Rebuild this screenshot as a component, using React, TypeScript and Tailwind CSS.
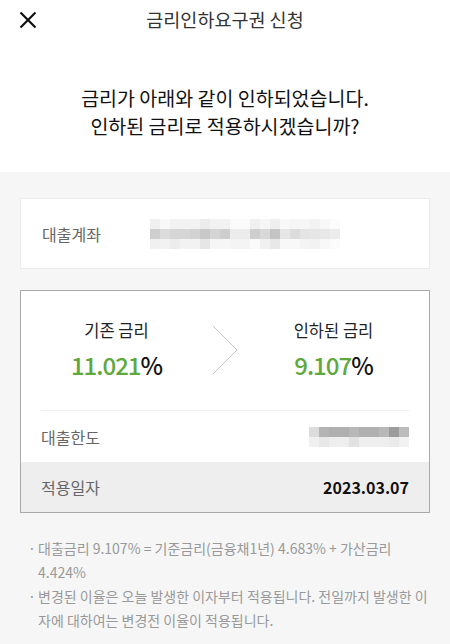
import React from "react";

const accountBlur = [
  ["#f0f0f0", "#f8f8f8", "#f2f2f2", "#f2f2f2", "#f2f2f2", "#ececec", "#f2f2f2", "#f2f2f2", "#fafafa", "#fafafa", "#f0f0f0", "#f6f6f6", "#eeeeee", "#f8f8f8", "#f6f6f6", "#f6f6f6", "#f2f2f2", "#f8f8f8", "#fcfcfc"],
  ["#cecece", "#dcdcdc", "#d6d6d6", "#d6d6d6", "#d2d2d2", "#c8c8c8", "#d4d4d4", "#cecece", "#ececec", "#ececec", "#cecece", "#d8d8d8", "#c4c4c4", "#e6e6e6", "#dcdcdc", "#e4e4e4", "#e6e6e6", "#e8e8e8", "#ececec"],
  ["#f0f0f0", "#f2f2f2", "#ececec", "#f2f2f2", "#f2f2f2", "#e6e6e6", "#f6f6f6", "#f6f6f6", "#f4f4f4", "#f4f4f4", "#fafafa", "#f0f0f0", "#e8e8e8", "#f8f8f8", "#f8f8f8", "#f4f4f4", "#f2f2f2", "#f8f8f8", "#fcfcfc"],
];

const limitBlur = [
  ["#dcdcdc", "#b4b4b4", "#b0b0b0", "#b0b0b0", "#b8b8b8", "#b0b0b0", "#b0b0b0", "#b8b8b8", "#9c9c9c", "#bcbcbc"],
  ["#f0f0f0", "#e8e8e8", "#eeeeee", "#eeeeee", "#e2e2e2", "#eeeeee", "#eeeeee", "#eeeeee", "#eaeaea", "#f2f2f2"],
];

// masked value, drawn as pixel blocks
const Blur = ({ rows }: { rows: string[][] }) => (
  <div className="flex flex-col">
    {rows.map((row, r) => (
      <div key={r} className="flex">
        {row.map((c, i) => (
          <div key={i} className="w-[10px] h-[10px]" style={{ backgroundColor: c }} />
        ))}
      </div>
    ))}
  </div>
);

const RateBox = ({ label, rate }: { label: string; rate: string }) => (
  <div className="flex flex-col items-center">
    <p className="text-[16.5px] leading-6 text-[#222]">{label}</p>
    <p className="mt-[7px] text-[24px] leading-8 font-medium tracking-[-1px]">
      <span className="text-[#5ea83c]">{rate}</span>
      <span className="text-[#111]">%</span>
    </p>
  </div>
);

export default function App() {
  return (
    <div className="w-[450px] h-[644px] overflow-hidden bg-[#f6f6f6] font-['Noto_Sans_CJK_KR','Noto_Sans',sans-serif]">
      <div className="bg-white">
        <header className="relative h-10 flex items-center justify-center">
          <button className="absolute left-[19px] top-[11px] w-[18px] h-[18px] flex items-center justify-center">
            <svg width="18" height="18" viewBox="0 0 18 18" fill="none" stroke="#111" strokeWidth="2.2">
              <path d="M1.5 1.5L16.5 16.5M16.5 1.5L1.5 16.5" />
            </svg>
          </button>
          <h1 className="text-[18.5px] text-[#333]">금리인하요구권 신청</h1>
        </header>
        <div className="pt-[44px] pb-[32px] text-center text-[19.5px] leading-7 text-[#111]">
          <p>금리가 아래와 같이 인하되었습니다.</p>
          <p>인하된 금리로 적용하시겠습니까?</p>
        </div>
      </div>

      <div className="px-5 pt-[26px]">
        <div className="h-[71px] bg-white border border-[#ececec] flex items-center pl-[21px]">
          <span className="w-[108px] text-[16px] text-[#666]">대출계좌</span>
          <Blur rows={accountBlur} />
        </div>

        <div className="mt-[21px] bg-white border border-[#a8a8a8]">
          <div className="grid grid-cols-[1fr_26px_1fr] items-center pt-[27px] pb-[29px]">
            <RateBox label="기존 금리" rate="11.021" />
            <svg width="26" height="50" viewBox="0 0 26 50" fill="none" stroke="#c4c4c4" strokeWidth="1">
              <path d="M1 1L25 25L1 49" />
            </svg>
            <RateBox label="인하된 금리" rate="9.107" />
          </div>
          <div className="mx-5 border-t border-[#f0f0f0] h-[52px] flex items-center justify-between">
            <span className="text-[16px] text-[#666]">대출한도</span>
            <Blur rows={limitBlur} />
          </div>
          <div className="h-[50px] bg-[#eeeeee] px-5 flex items-center justify-between">
            <span className="text-[16px] text-[#666]">적용일자</span>
            <span className="text-[16px] font-bold text-[#111]">2023.03.07</span>
          </div>
        </div>
      </div>

      <ul className="mt-[23px] pl-[28px] pr-5 text-[14px] leading-6 text-[#999]">
        <li className="flex">
          <span className="w-[10px] shrink-0">·</span>
          <span className="break-all">
            대출금리 9.107% = 기준금리(금융채1년) 4.683% + 가산금리 <span className="whitespace-nowrap">4.424%</span>
          </span>
        </li>
        <li className="flex">
          <span className="w-[10px] shrink-0">·</span>
          <span className="break-all">변경된 이율은 오늘 발생한 이자부터 적용됩니다. 전일까지 발생한 이자에 대하여는 변경전 이율이 적용됩니다.</span>
        </li>
      </ul>
    </div>
  );
}
